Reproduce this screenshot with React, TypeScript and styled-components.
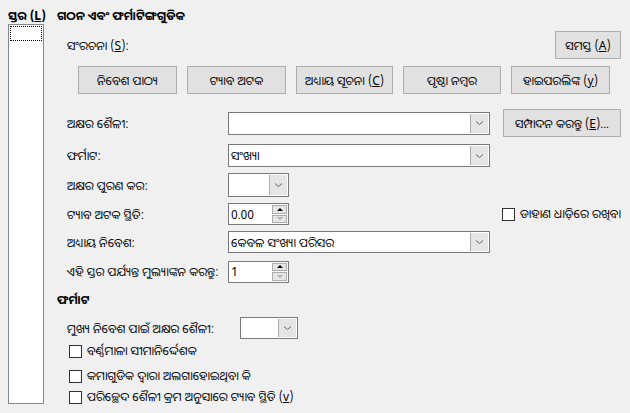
import React from "react";
import styled, { createGlobalStyle } from "styled-components";

const Global = createGlobalStyle`
  html, body { margin: 0; padding: 0; background: #f0f0f0; }
  body {
    font-family: "Noto Sans Oriya", "Noto Sans", "Liberation Sans", sans-serif;
    font-size: 12px;
    color: #000;
  }
  * { box-sizing: border-box; }
`;

const Dialog = styled.div`
  width: 630px;
  height: 413px;
  display: flex;
  padding: 8px 9px 0 8px;
  gap: 13px;
  overflow: hidden;
`;

const LeftCol = styled.div`
  width: 36px;
  display: flex;
  flex-direction: column;
`;

const BoldLabel = styled.div`
  font-weight: bold;
  height: 16px;
  line-height: 16px;
  white-space: nowrap;
`;

const ListBox = styled.div`
  height: 380px;
  background: #fff;
  border: 1px solid #828790;
  padding: 1px;
`;

const FocusItem = styled.div`
  height: 15px;
  border: 1px dotted #000;
`;

const Main = styled.div`
  flex: 1;
  display: flex;
  flex-direction: column;
`;

const StructRow = styled.div`
  display: flex;
  align-items: center;
  justify-content: space-between;
  height: 28px;
  margin-top: 7px;
  padding-left: 10px;
`;

const Button = styled.button<{ $w: number; $h?: number }>`
  width: ${(p) => p.$w}px;
  height: ${(p) => p.$h ?? 28}px;
  background: #e1e1e1;
  border: 1px solid #adadad;
  font: inherit;
  color: #000;
  padding: 0;
  white-space: nowrap;
`;

const ButtonRow = styled.div`
  display: flex;
  gap: 10px;
  margin-top: 7px;
  padding-left: 21px;
`;

const FormRow = styled.div<{ $mt: number; $h: number }>`
  display: flex;
  align-items: center;
  height: ${(p) => p.$h}px;
  margin-top: ${(p) => p.$mt}px;
  padding-left: 10px;
`;

const Label = styled.div<{ $w: number }>`
  width: ${(p) => p.$w}px;
  white-space: nowrap;
`;

const Combo = styled.div<{ $w: number; $h: number }>`
  width: ${(p) => p.$w}px;
  height: ${(p) => p.$h}px;
  display: flex;
  background: #fff;
  border: 1px solid #7a7a7a;
`;

const ComboText = styled.div`
  flex: 1;
  display: flex;
  align-items: center;
  padding-left: 2px;
  white-space: nowrap;
  overflow: hidden;
`;

const DropBtn = styled.div`
  width: 18px;
  margin: 1px;
  background: #e5e5e5;
  border-left: 1px solid #acacac;
  display: flex;
  align-items: center;
  justify-content: center;
`;

const Spin = styled.div`
  width: 61px;
  height: 22px;
  display: flex;
  background: #fff;
  border: 1px solid #7a7a7a;
`;

const SpinText = styled.div`
  flex: 1;
  display: flex;
  align-items: center;
  padding-left: 2px;
`;

const SpinBtns = styled.div`
  width: 16px;
  display: flex;
  flex-direction: column;
  gap: 1px;
  padding: 1px 1px 1px 0;
`;

const SpinBtn = styled.div`
  flex: 1;
  background: #e5e5e5;
  border: 1px solid #acacac;
  display: flex;
  align-items: center;
  justify-content: center;
`;

const Tri = styled.div<{ $up?: boolean; $dim?: boolean }>`
  width: 0;
  height: 0;
  border-left: 3px solid transparent;
  border-right: 3px solid transparent;
  ${(p) =>
    p.$up
      ? `border-bottom: 3px solid ${p.$dim ? "#b0b0b0" : "#000"};`
      : `border-top: 3px solid ${p.$dim ? "#b0b0b0" : "#000"};`}
`;

const Check = styled.label<{ $mt?: number }>`
  display: flex;
  align-items: center;
  gap: 5px;
  white-space: nowrap;
  height: 16px;
  line-height: 16px;
  margin-top: ${(p) => p.$mt ?? 0}px;
`;

const Box = styled.span`
  width: 13px;
  height: 13px;
  background: #fff;
  border: 1px solid #333;
  flex: none;
`;

const Section = styled.div`
  margin-top: 9px;
  font-weight: bold;
  height: 16px;
  line-height: 16px;
`;

const CheckList = styled.div`
  display: flex;
  flex-direction: column;
  padding-left: 12px;
  margin-top: 4px;
`;

const U = styled.span`
  text-decoration: underline;
`;

const Spacer = styled.div<{ $w: number }>`
  width: ${(p) => p.$w}px;
  flex: none;
`;

const Chevron = () => (
  <svg width="9" height="6" viewBox="0 0 9 6">
    <path d="M1 1.5 L4.5 4.5 L8 1.5" fill="none" stroke="#606060" strokeWidth="1" />
  </svg>
);

function ComboBox({ w, h, text }: { w: number; h: number; text?: string }) {
  return (
    <Combo $w={w} $h={h}>
      <ComboText>{text}</ComboText>
      <DropBtn>
        <Chevron />
      </DropBtn>
    </Combo>
  );
}

function Spinner({ value }: { value: string }) {
  return (
    <Spin>
      <SpinText>{value}</SpinText>
      <SpinBtns>
        <SpinBtn>
          <Tri $up />
        </SpinBtn>
        <SpinBtn>
          <Tri $dim />
        </SpinBtn>
      </SpinBtns>
    </Spin>
  );
}

export default function App() {
  return (
    <>
      <Global />
      <Dialog>
        <LeftCol>
          <BoldLabel>
            ସ୍ତର (<U>L</U>)
          </BoldLabel>
          <ListBox>
            <FocusItem />
          </ListBox>
        </LeftCol>
        <Main>
          <BoldLabel>ଗଠନ ଏବଂ ଫର୍ମାଟିଙ୍ଗଗୁଡିକ</BoldLabel>
          <StructRow>
            <span>
              ସଂରଚନା (<U>S</U>):
            </span>
            <Button $w={66}>
              ସମସ୍ତ (<U>A</U>)
            </Button>
          </StructRow>
          <ButtonRow>
            <Button $w={99}>ନିବେଶ ପାଠ୍ୟ</Button>
            <Button $w={99}>ଟ୍ୟାବ ଅଟକ</Button>
            <Button $w={97}>
              ଅଧ୍ୟାୟ ସୂଚନା (<U>C</U>)
            </Button>
            <Button $w={98}>ପୃଷ୍ଠା ନମ୍ବର</Button>
            <Button $w={99}>
              ହାଇପରଲିଙ୍କ (<U>y</U>)
            </Button>
          </ButtonRow>
          <FormRow $mt={15} $h={28}>
            <Label $w={161}>ଅକ୍ଷର ଶୈଳୀ:</Label>
            <ComboBox w={262} h={23} />
            <Spacer $w={13} />
            <Button $w={118}>
              ସମ୍ପାଦନ କରନ୍ତୁ (<U>E</U>)...
            </Button>
          </FormRow>
          <FormRow $mt={7} $h={23}>
            <Label $w={161}>ଫର୍ମାଟ:</Label>
            <ComboBox w={262} h={23} text="ସଂଖ୍ୟା" />
          </FormRow>
          <FormRow $mt={6} $h={24}>
            <Label $w={161}>ଅକ୍ଷର ପୁରଣ କର:</Label>
            <ComboBox w={61} h={24} />
          </FormRow>
          <FormRow $mt={6} $h={22}>
            <Label $w={161}>ଟ୍ୟାବ ଅଟକ ସ୍ଥିତି:</Label>
            <Spinner value="0.00" />
            <Spacer $w={213} />
            <Check>
              <Box />
              <span>ଡାହାଣ ଧାଡ଼ିରେ ରଖିବା</span>
            </Check>
          </FormRow>
          <FormRow $mt={6} $h={22}>
            <Label $w={161}>ଅଧ୍ୟାୟ ନିବେଶ:</Label>
            <ComboBox w={262} h={22} text="କେବଳ ସଂଖ୍ୟା ପରିସର" />
          </FormRow>
          <FormRow $mt={7} $h={23}>
            <Label $w={161}>ଏହି ସ୍ତର ପର୍ଯ୍ୟନ୍ତ ମୁଲ୍ୟାଙ୍କନ କରନ୍ତୁ:</Label>
            <Spinner value="1" />
          </FormRow>
          <Section>ଫର୍ମାଟ</Section>
          <FormRow $mt={9} $h={22}>
            <Label $w={173}>ମୁଖ୍ୟ ନିବେଶ ପାଇଁ ଅକ୍ଷର ଶୈଳୀ:</Label>
            <ComboBox w={58} h={22} />
          </FormRow>
          <CheckList>
            <Check>
              <Box />
              <span>ବର୍ଣ୍ଣମାଳା ସୀମାନିର୍ଦ୍ଦେଶକ</span>
            </Check>
            <Check $mt={9}>
              <Box />
              <span>କମାଗୁଡିକ ଦ୍ୱାରା ଅଲଗାହୋଇଥିବା କି</span>
            </Check>
            <Check $mt={5}>
              <Box />
              <span>
                ପରିଚ୍ଛେଦ ଶୈଳୀ କ୍ରମ ଅନୁସାରେ ଟ୍ୟାବ ସ୍ଥିତି (<U>v</U>)
              </span>
            </Check>
          </CheckList>
        </Main>
      </Dialog>
    </>
  );
}
